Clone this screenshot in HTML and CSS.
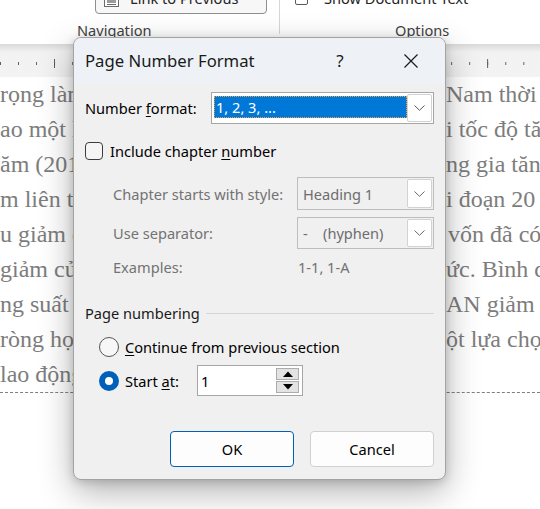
FILE: index.html
```html
<!DOCTYPE html>
<html lang="vi">
<head>
<meta charset="utf-8">
<title>Page Number Format</title>
<link rel="stylesheet" href="styles.css">
</head>
<body>
<div class="app">
  <div class="ribbon">
    <div class="rb-group rb-nav">
      <div class="rb-btn">
        <svg class="rb-icon" width="17" height="20" viewBox="0 0 17 20"><rect x="1.5" y="1.5" width="14" height="17" fill="#fff" stroke="#6a6a6a"/><rect x="4" y="4" width="9" height="11" fill="#9a9a9a"/><path d="M4 16.5h9" stroke="#6a6a6a"/></svg>
        <span>Link to Previous</span>
      </div>
      <div class="rb-label rb-label-nav">Navigation</div>
    </div>
    <div class="rb-sep"></div>
    <div class="rb-group rb-opts">
      <div class="rb-check"><span class="rb-cb"></span><span>Show Document Text</span></div>
      <div class="rb-label rb-label-opts">Options</div>
    </div>
  </div>
  <div class="ruler"><div class="ticks"></div></div>
  <div class="doc">
    <div class="line"><span class="l">rọng làm</span><span class="r">Nam thời</span></div>
    <div class="line"><span class="l">ao một l</span><span class="r">i tốc độ tăng</span></div>
    <div class="line"><span class="l">ăm (201</span><span class="r">ng gia tăng</span></div>
    <div class="line"><span class="l">m liên t</span><span class="r">i đoạn 20</span></div>
    <div class="line"><span class="l">u giảm d</span><span class="r r2">vốn đã có</span></div>
    <div class="line"><span class="l">giảm củ</span><span class="r">ức. Bình quân</span></div>
    <div class="line"><span class="l">ng suất l</span><span class="r">AN giảm</span></div>
    <div class="line"><span class="l">ròng học</span><span class="r">ột lựa chọn</span></div>
    <div class="line"><span class="l">lao động</span><span class="r"></span></div>
    <div class="hf-sep"></div>
  </div>
</div>

<div class="dialog">
  <div class="titlebar">
    <span class="title">Page Number Format</span>
    <span class="help">?</span>
    <span class="close"><svg width="16" height="16" viewBox="0 0 16 16"><path d="M1.5 1.5L14.5 14.5M14.5 1.5L1.5 14.5" stroke="#1a1a1a" stroke-width="1.2" fill="none"/></svg></span>
  </div>
  <div class="dbody">
    <div class="row r-format">
      <span class="fmt-lbl">Number <u>f</u>ormat:</span>
      <div class="combo combo-active">
        <div class="combo-val"><span class="sel">1, 2, 3, ...</span></div>
        <div class="combo-btn"><svg width="11" height="6" viewBox="0 0 11 6"><path d="M0.5 0.5L5.5 5.3L10.5 0.5" stroke="#5a5a5a" fill="none"/></svg></div>
      </div>
    </div>
    <div class="row r-check">
      <span class="checkbox"></span>
      <span>Include chapter <u>n</u>umber</span>
    </div>
    <div class="row r-sub r-style">
      <span class="sub-lbl">Chapter starts with style:</span>
      <div class="combo combo-dis">
        <div class="combo-val dis-val">Heading 1</div>
        <div class="combo-btn"><svg width="11" height="6" viewBox="0 0 11 6"><path d="M0.5 0.5L5.5 5.3L10.5 0.5" stroke="#6a6a6a" fill="none"/></svg></div>
      </div>
    </div>
    <div class="row r-sub r-sep">
      <span class="sub-lbl">Use separator:</span>
      <div class="combo combo-dis">
        <div class="combo-val dis-val"><span class="hy">-</span>(hyphen)</div>
        <div class="combo-btn"><svg width="11" height="6" viewBox="0 0 11 6"><path d="M0.5 0.5L5.5 5.3L10.5 0.5" stroke="#6a6a6a" fill="none"/></svg></div>
      </div>
    </div>
    <div class="row r-sub r-ex">
      <span class="sub-lbl">Examples:</span>
      <span class="ex-val">1-1, 1-A</span>
    </div>
    <div class="row group-head">
      <span>Page numbering</span>
      <span class="rule"></span>
    </div>
    <div class="row r-radio">
      <span class="radio"></span>
      <span><u>C</u>ontinue from previous section</span>
    </div>
    <div class="row r-radio r-start">
      <span class="radio radio-on"></span>
      <span class="start-lbl">Start <u>a</u>t:</span>
      <div class="spin">
        <span class="spin-val">1</span>
        <div class="spin-btns">
          <span class="spin-btn"><svg width="10" height="6" viewBox="0 0 10 6"><path d="M0 6L5 0.5L10 6Z" fill="#000"/></svg></span>
          <span class="spin-btn"><svg width="10" height="6" viewBox="0 0 10 6"><path d="M0 0L5 5.5L10 0Z" fill="#000"/></svg></span>
        </div>
      </div>
    </div>
    <div class="buttons">
      <button class="btn btn-primary">OK</button>
      <button class="btn">Cancel</button>
    </div>
  </div>
</div>
</body>
</html>
```
FILE: styles.css
```css
html, body {
  margin: 0;
  padding: 0;
}
body {
  width: 540px;
  height: 509px;
  overflow: hidden;
  position: relative;
  background: #ffffff;
  font-family: "Noto Sans", sans-serif;
}

/* ---------- ribbon ---------- */
.ribbon {
  height: 44px;
  display: flex;
  overflow: hidden;
  background: #ffffff;
  font-size: 14.6px;
  color: #242424;
}
.rb-group {
  display: flex;
  flex-direction: column;
  margin-top: -18px;
}
.rb-nav {
  width: 279px;
}
.rb-btn {
  margin-left: 95px;
  width: 172px;
  height: 32px;
  box-sizing: border-box;
  border: 1px solid #8f8f8f;
  border-radius: 4px;
  background: #f7f7f7;
  display: flex;
  align-items: center;
  padding-left: 7px;
  gap: 10px;
}
.rb-icon {
  flex: none;
}
.rb-label {
  height: 20px;
  line-height: 20px;
  margin-top: 6px;
  color: #424242;
}
.rb-label-nav {
  margin-left: 77px;
}
.rb-sep {
  width: 1px;
  height: 34px;
  background: #d6d6d6;
}
.rb-opts {
  flex: 1;
}
.rb-check {
  height: 32px;
  display: flex;
  align-items: center;
  margin-left: 15px;
  gap: 16px;
}
.rb-cb {
  width: 13px;
  height: 13px;
  box-sizing: border-box;
  border: 1px solid #5a5a5a;
  border-radius: 2px;
  background: #fff;
}
.rb-label-opts {
  margin-left: 115px;
}

/* ---------- ruler ---------- */
.ruler {
  height: 33px;
  background: linear-gradient(#d9d9d9, #f2f2f2 8px, #f3f3f3);
  overflow: hidden;
}
.ticks {
  margin-top: 15px;
  height: 9px;
  background-image:
    linear-gradient(to right, #5c5c5c 1px, transparent 1px),
    linear-gradient(to right, #5c5c5c 1px, transparent 1px);
  background-size: 72.2px 9px, 18.05px 3px;
  background-position: 54px 0, 0 3px;
  background-repeat: repeat-x;
}

/* ---------- document ---------- */
.doc {
  font-family: "Liberation Serif", serif;
  font-size: 24px;
  line-height: 35px;
  color: #7d7d7d;
}
.line {
  display: grid;
  grid-template-columns: 446px 94px;
  height: 35px;
  white-space: nowrap;
}
.line span {
  overflow: hidden;
}
.r2 {
  padding-left: 2px;
}
.hf-sep {
  height: 0;
  border-top: 1px dashed #7f7f7f;
}

/* ---------- dialog ---------- */
.dialog {
  position: absolute;
  left: 73px;
  top: 37px;
  width: 373px;
  height: 443px;
  box-sizing: border-box;
  border: 1px solid #a3a3a3;
  border-radius: 8px;
  background: #f0f0f0;
  overflow: hidden;
  box-shadow: 0 12px 34px rgba(0, 0, 0, 0.30), 0 2px 10px rgba(0, 0, 0, 0.16);
  font-family: "Noto Sans", sans-serif;
  font-size: 14.6px;
  color: #000;
}
.titlebar {
  height: 45px;
  background: #eef2f7;
  display: flex;
  align-items: center;
  padding: 0 11px;
}
.title {
  flex: 1;
  font-size: 16.7px;
  color: #1a1a1a;
}
.help {
  width: 46px;
  margin-right: 25px;
  text-align: center;
  font-size: 17px;
  color: #1a1a1a;
}
.close {
  width: 46px;
  height: 16px;
  display: flex;
  justify-content: center;
}
.dbody {
  padding: 9px 11px 0;
}
.row {
  display: flex;
  align-items: center;
}
u {
  text-underline-offset: 2px;
}

.r-format {
  height: 32px;
}
.fmt-lbl {
  width: 126px;
}
.combo {
  box-sizing: border-box;
  border: 1px solid #a6a6a6;
  padding: 1px;
  display: flex;
  height: 100%;
}
.combo-active {
  width: 223px;
  background: #ffffff;
}
.combo-val {
  flex: 1;
  display: flex;
}
.combo-active .combo-val {
  padding: 2px 0 4px 1px;
}
.sel {
  flex: 1;
  box-sizing: border-box;
  background: #0078d7;
  color: #ffffff;
  border: 1px dotted #f3a03a;
  padding-left: 1px;
  line-height: 20px;
}
.combo-btn {
  width: 25px;
  box-sizing: border-box;
  background: #ffffff;
  border: 1px solid #d2d2d2;
  border-radius: 2px;
  display: flex;
  align-items: center;
  justify-content: center;
}

.r-check {
  height: 20px;
  margin-top: 17px;
  gap: 7px;
}
.checkbox {
  width: 18px;
  height: 18px;
  box-sizing: border-box;
  border: 1px solid #3c3c3c;
  border-radius: 4px;
  background: #f5f5f5;
}

.r-sub {
  padding-left: 28px;
  color: #737373;
}
.sub-lbl {
  width: 184px;
}
.r-style {
  height: 33px;
  margin-top: 16px;
}
.r-sep {
  height: 32px;
  margin-top: 7px;
}
.combo-dis {
  width: 137px;
  background: #f0f0f0;
  border-color: #bdbdbd;
}
.dis-val {
  align-items: center;
  padding-left: 4px;
  color: #6d6d6d;
}
.hy {
  width: 20px;
}
.r-ex {
  height: 20px;
  margin-top: 8px;
}
.ex-val {
  padding-left: 1px;
}

.group-head {
  height: 20px;
  margin-top: 26px;
  color: #1a1a1a;
}
.rule {
  flex: 1;
  height: 1px;
  margin-left: 6px;
  background: #d6d6d6;
}

.r-radio {
  height: 22px;
  margin-top: 13px;
  padding-left: 14px;
  gap: 6px;
}
.radio {
  width: 20px;
  height: 20px;
  box-sizing: border-box;
  border: 1px solid #555555;
  border-radius: 50%;
  background: #f7f7f7;
}
.radio-on {
  border: 6px solid #005fb8;
  background: #ffffff;
}
.r-start {
  height: 31px;
  margin-top: 7px;
}
.start-lbl {
  width: 66px;
}
.spin {
  width: 106px;
  height: 31px;
  box-sizing: border-box;
  border: 1px solid #a6a6a6;
  background: #ffffff;
  display: flex;
  align-items: center;
  padding: 0 3px 0 3px;
}
.spin-val {
  flex: 1;
}
.spin-btns {
  width: 23px;
  display: flex;
  flex-direction: column;
  gap: 1px;
}
.spin-btn {
  height: 12px;
  box-sizing: border-box;
  border: 1px solid #adadad;
  background: #e3e3e3;
  display: flex;
  align-items: center;
  justify-content: center;
}

.buttons {
  display: flex;
  justify-content: flex-end;
  gap: 16px;
  margin-top: 35px;
}
.btn {
  width: 124px;
  height: 36px;
  box-sizing: border-box;
  border: 1px solid #d0d0d0;
  border-radius: 4px;
  background: #fdfdfd;
  font-family: "Noto Sans", sans-serif;
  font-size: 14.6px;
  color: #000;
  padding: 0;
}
.btn-primary {
  border-color: #005fb8;
}
```
